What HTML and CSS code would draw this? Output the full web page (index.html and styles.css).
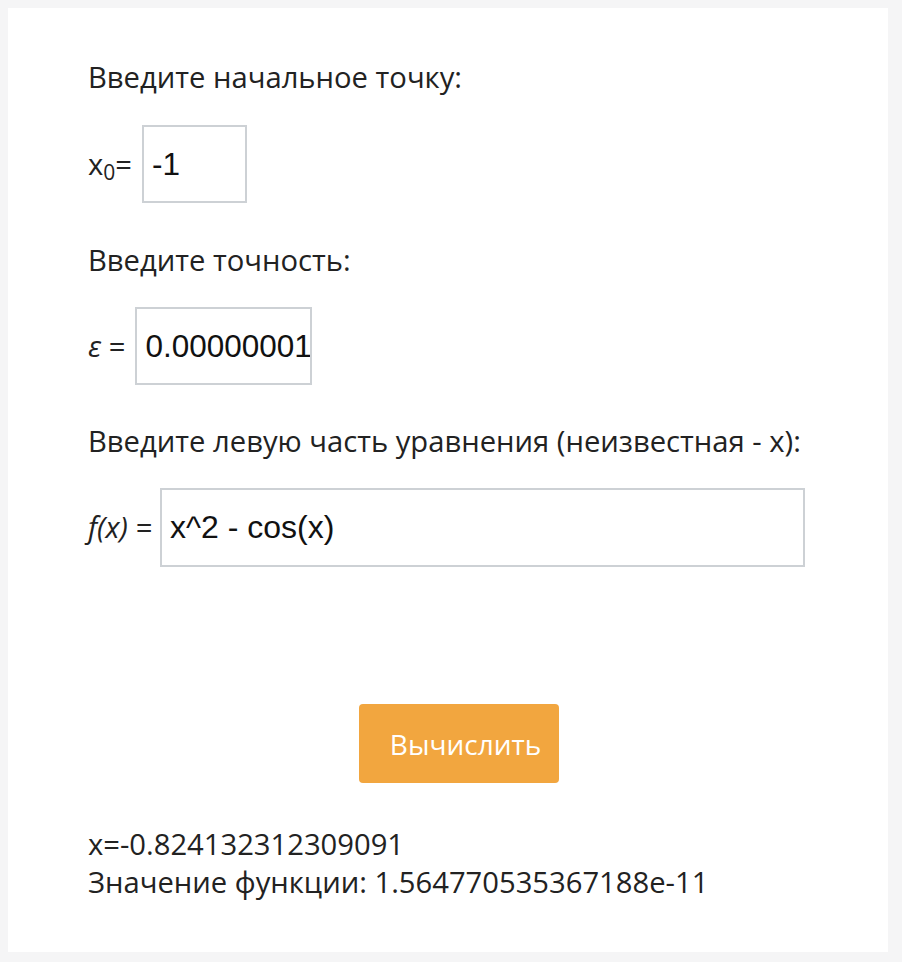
FILE: index.html
```html
<!DOCTYPE html>
<html lang="ru">
<head>
<meta charset="utf-8">
<title>Метод Ньютона</title>
<link rel="stylesheet" href="styles.css">
</head>
<body>
<div class="card">
  <p class="label">Введите начальное точку:</p>
  <div class="row row-x0">
    <span class="var">x<sub>0</sub>=</span>
    <input class="field field-x0" type="text" value="-1">
  </div>
  <p class="label label-eps">Введите точность:</p>
  <div class="row row-eps">
    <span class="var"><i>ε</i> =</span>
    <input class="field field-eps" type="text" value="0.00000001">
  </div>
  <p class="label label-fx">Введите левую часть уравнения (неизвестная - x):</p>
  <div class="row row-fx">
    <span class="var"><i>f(x) =</i></span>
    <input class="field field-fx" type="text" value="x^2 - cos(x)">
  </div>
  <div class="actions">
    <button class="btn" type="button">Вычислить</button>
  </div>
  <div class="result">
    <div>x=-0.824132312309091</div>
    <div>Значение функции: 1.564770535367188e-11</div>
  </div>
</div>
</body>
</html>
```

FILE: styles.css
```css
html, body {
  margin: 0;
  padding: 0;
}
body {
  background: #f5f5f6;
  padding: 8px;
  font-family: "Open Sans", "Noto Sans", sans-serif;
  color: #222222;
  font-size: 29.2px;
  line-height: 38px;
}
.card {
  width: 880px;
  height: 944px;
  box-sizing: border-box;
  background: #ffffff;
  padding: 50px 0 0 80px;
}
.label {
  margin: 0;
}
.label-eps {
  margin-top: 38px;
}
.label-fx {
  margin-top: 37px;
}
.row {
  display: flex;
  align-items: baseline;
  gap: 10px;
  margin-top: 29px;
}
.row-eps, .row-fx {
  margin-top: 28px;
}
.row-eps { gap: 10px; }
.row-fx { gap: 8px; }
.var sub {
  font-size: 21px;
  line-height: 0;
  vertical-align: -5px;
}
.var i {
  font-style: italic;
}
.field {
  box-sizing: border-box;
  height: 78px;
  border: 2px solid #cdd1d5;
  padding: 0 0 0 8px;
  margin: 0;
  font-family: "Liberation Sans", Arial, sans-serif;
  font-size: 31.5px;
  color: #111;
  background: #fff;
  outline: none;
}
.field-x0 { width: 105px; }
.field-eps { width: 177px; }
.field-fx { width: 645px; height: 79px; font-size: 32px; }
.actions {
  display: flex;
  justify-content: center;
  padding-right: 59px;
  margin-top: 137px;
}
.btn {
  width: 200px;
  height: 79px;
  border: none;
  border-radius: 4px;
  background: #f2a63f;
  color: #ffffff;
  font-family: "Open Sans", "Noto Sans", sans-serif;
  font-size: 28px;
  padding: 0 0 0 14px;
  cursor: pointer;
}
.result {
  margin-top: 42px;
}
```
